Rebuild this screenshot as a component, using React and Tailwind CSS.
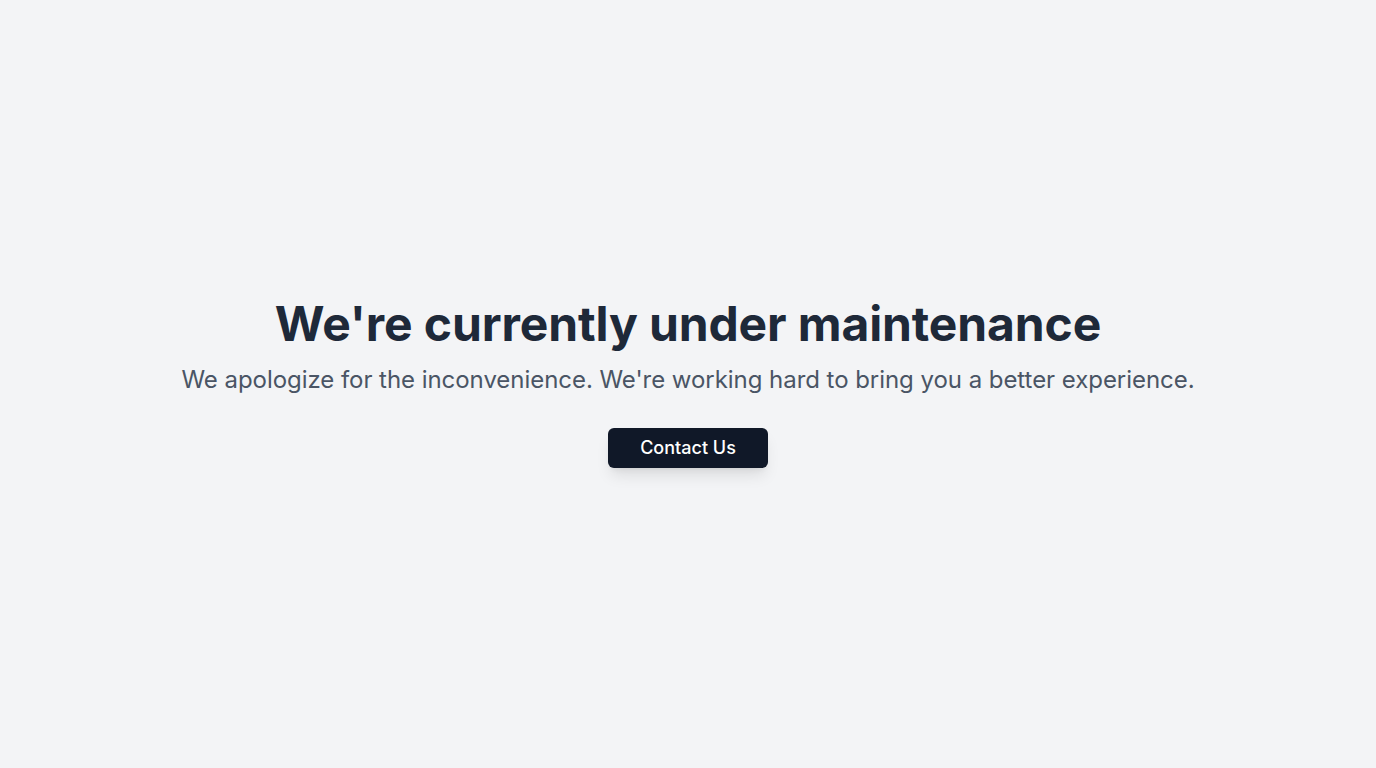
import React from "react";

const App = () => {
  return (
    <div className="min-h-screen flex items-center justify-center bg-gray-100 font-['Inter',sans-serif]">
      <div className="text-center">
        <h1 className="text-5xl font-bold text-gray-800 tracking-[-0.0025em]">
          We're currently under maintenance
        </h1>
        <p className="mt-4 text-2xl text-gray-600 tracking-[-0.002em]">
          We apologize for the inconvenience. We're working hard to bring you a better experience.
        </p>
        <button className="mt-8 bg-gray-900 text-white text-lg font-medium px-8 h-10 rounded-md shadow-lg">
          Contact Us
        </button>
      </div>
    </div>
  );
};

export default App;
